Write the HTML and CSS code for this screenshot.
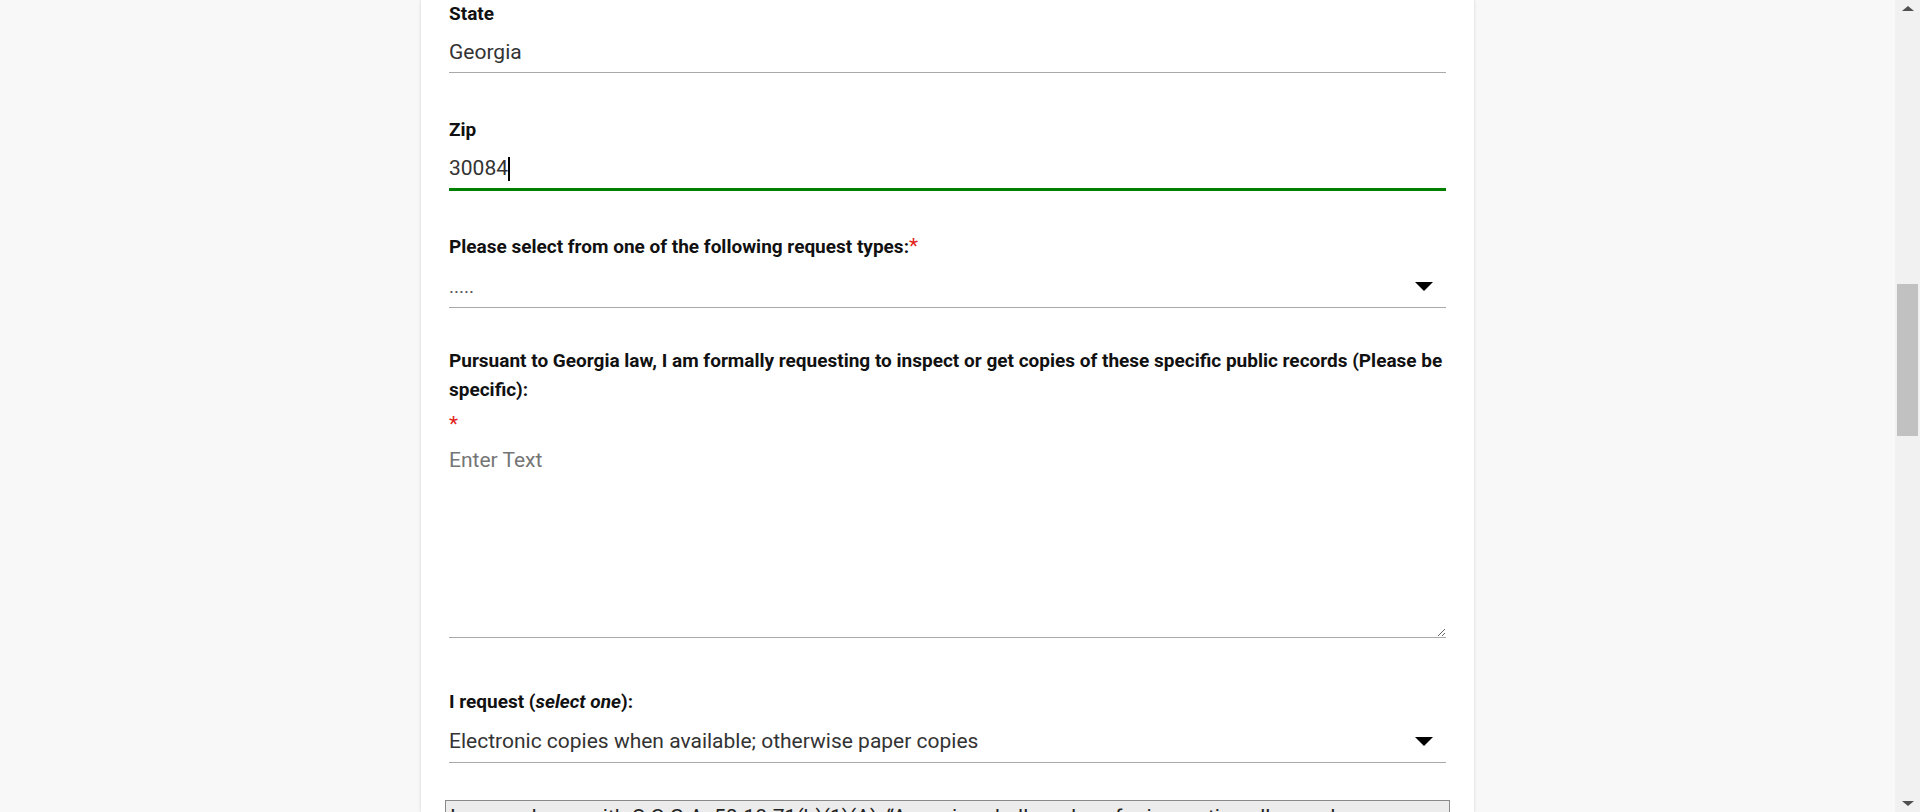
FILE: index.html
```html
<!DOCTYPE html>
<html lang="en">
<head>
<meta charset="utf-8">
<title>Open Records Request</title>
<link rel="stylesheet" href="styles.css">
</head>
<body>
<div class="viewport">
  <div class="card">
    <form class="form">
      <div class="field field-first">
        <div class="label">State</div>
        <div class="input">Georgia</div>
      </div>
      <div class="field">
        <div class="label">Zip</div>
        <div class="input input-focus">30084<span class="caret"></span></div>
      </div>
      <div class="field field-select">
        <div class="label">Please select from one of the following request types:<span class="req">*</span></div>
        <div class="input select"><span class="select-text">.....</span>
          <svg class="arrow" width="18" height="9" viewBox="0 0 18 9"><path d="M0 0H18L9 9Z" fill="#000"/></svg>
        </div>
      </div>
      <div class="field field-area">
        <div class="label">Pursuant to Georgia law, I am formally requesting to inspect or get copies of these specific public records (Please be specific):</div>
        <div class="req req-line">*</div>
        <textarea class="textarea" placeholder="Enter Text"></textarea>
      </div>
      <div class="field field-last">
        <div class="label">I request (<em>select one</em>):</div>
        <div class="input select"><span class="select-value">Electronic copies when available; otherwise paper copies</span>
          <svg class="arrow" width="18" height="9" viewBox="0 0 18 9"><path d="M0 0H18L9 9Z" fill="#000"/></svg>
        </div>
      </div>
      <div class="notice">In accordance with O.C.G.A. 50-18-71(b)(1)(A), “Agencies shall produce for inspection all records responsive to a request within a reasonable amount of time not to exceed three business days of receipt of a request.”</div>
    </form>
  </div>
</div>
<div class="scrollbar">
  <div class="sb-arrow sb-up"></div>
  <div class="sb-track"><div class="sb-thumb"></div></div>
  <div class="sb-arrow sb-down"></div>
</div>
</body>
</html>
```

FILE: styles.css
```css
html, body {
  margin: 0;
  height: 812px;
  overflow: hidden;
}
body {
  display: flex;
  background: #f8f8f8;
  font-family: Roboto, "Liberation Sans", Arial, sans-serif;
  color: #000;
}
.viewport {
  flex: 1;
  display: flex;
  justify-content: center;
  height: 812px;
}
.card {
  width: 1053px;
  box-sizing: border-box;
  background: #fff;
  box-shadow: 0 0 3px rgba(0, 0, 0, 0.16);
  padding: 0 28px;
}
.form {
  margin-top: -1px;
}
.field {
  margin-bottom: 41px;
}
.field-first {
  margin-bottom: 42px;
}
.field-select {
  margin-bottom: 38px;
}
.field-area {
  margin-bottom: 49px;
}
.field-last {
  margin-bottom: 37px;
}
.label {
  font-size: 19px;
  font-weight: 700;
  line-height: 29px;
  color: #111;
}
.label em {
  font-style: italic;
}
.req {
  color: #e2231a;
  font-weight: 400;
  font-size: 21px;
}
.req-line {
  line-height: 29px;
  margin-top: 6px;
}
.input {
  margin-top: 5px;
  height: 39px;
  border-bottom: 1px solid #a9a9a9;
  font-size: 21px;
  line-height: 39px;
  color: #333;
  display: flex;
  align-items: center;
}
.input-focus {
  border-bottom: 3px solid #008000;
}
.caret {
  display: inline-block;
  width: 2px;
  height: 24px;
  background: #000;
}
.select {
  height: 41px;
  line-height: 41px;
  justify-content: space-between;
}
.select-text {
  color: #555;
  font-size: 19px;
}
.select-value {
  color: #333;
}
.arrow {
  margin-right: 13px;
  display: block;
}
.textarea {
  display: block;
  margin-top: 4px;
  width: 100%;
  box-sizing: border-box;
  height: 195px;
  border: none;
  border-bottom: 1px solid #a9a9a9;
  padding: 5px 0;
  font-family: Roboto, "Liberation Sans", Arial, sans-serif;
  font-size: 21px;
  line-height: 25px;
  color: #333;
  resize: vertical;
  outline: none;
  background: #fff;
}
.textarea::placeholder {
  color: #757575;
}
.notice {
  margin: 0 -4px 0 -4px;
  background: #ececec;
  border: 1px solid #8a8a8a;
  padding: 3px 4px;
  font-size: 21px;
  line-height: 26px;
  color: #222;
}
.scrollbar {
  width: 25px;
  height: 812px;
  background: #f1f1f1;
  display: flex;
  flex-direction: column;
  align-items: center;
}
.sb-arrow {
  width: 0;
  height: 0;
  border-left: 6px solid transparent;
  border-right: 6px solid transparent;
}
.sb-up {
  margin-top: 6px;
  border-bottom: 5px solid #505050;
}
.sb-down {
  margin-bottom: 6px;
  border-top: 5px solid #505050;
}
.sb-track {
  flex: 1;
  width: 100%;
  display: flex;
  justify-content: center;
}
.sb-thumb {
  margin-top: 273px;
  width: 21px;
  height: 152px;
  background: #c1c1c1;
}
```
